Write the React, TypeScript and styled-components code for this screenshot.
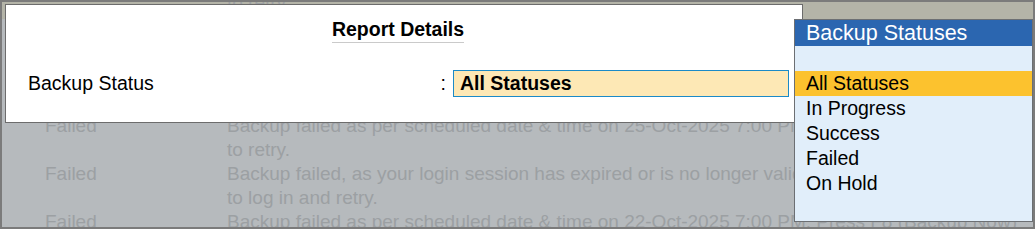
import React from 'react';
import styled, { createGlobalStyle } from 'styled-components';

const GlobalStyle = createGlobalStyle`
    * { box-sizing: border-box; }
    body {
        margin: 0;
        font-family: "Liberation Sans", Arial, sans-serif;
    }
`

const Screen = styled.div`
    position: relative;
    width: 1035px;
    height: 229px;
    border: 2px solid #7b7b7b;
    overflow: hidden;
    background: linear-gradient(#b4b4a8 0, #b4b4a8 17px, #b6babd 17px);
`

const ReportList = styled.div`
    margin-top: -35px;
    padding-left: 43px;
`

const ReportRow = styled.div<{ $first?: boolean }>`
    display: grid;
    grid-template-columns: 182px 1fr;
    font-size: 19px;
    line-height: 24px;
    color: #9ca0a3;
    white-space: nowrap;
    margin-bottom: ${(props) => (props.$first ? '3px' : '0')};
`

const Overlay = styled.div`
    position: absolute;
    left: 3px;
    top: 2px;
    width: 798px;
    height: 119px;
    background: #fff;
    border: 1px solid #6c6c6c;
    padding-top: 12px;
`

const TitleRow = styled.div`
    display: flex;
    justify-content: center;
    padding-right: 12px;
`

const Title = styled.h1`
    margin: 0;
    font-size: 19.5px;
    line-height: 24px;
    font-weight: bold;
    color: #000;
    padding-bottom: 1px;
    border-bottom: 1px solid #cacaca;
`

const FieldRow = styled.div`
    display: flex;
    align-items: center;
    margin-top: 27px;
    padding: 0 13px 0 22px;
    font-size: 19.5px;
    color: #000;
`

const Label = styled.div`
    flex: 1;
`

const Colon = styled.span`
    margin-right: 7px;
`

const Field = styled.div`
    width: 336px;
    height: 27px;
    border: 1px solid #1b8ac7;
    background: #fde8b5;
    padding-left: 6px;
    font-weight: bold;
    line-height: 25px;
`

const Popup = styled.div`
    position: absolute;
    left: 792px;
    top: 17px;
    width: 239px;
    height: 203px;
    border: 1px solid #6c6f73;
    background: #e1eefa;
`

const PopupHeader = styled.div`
    height: 26px;
    background: #2b66b0;
    color: #fff;
    font-size: 21.5px;
    line-height: 26px;
    padding-left: 11px;
`

const OptionList = styled.ul`
    list-style: none;
    margin: 25px 0 0;
    padding: 0;
`

const Option = styled.li<{ $active?: boolean }>`
    height: 25px;
    line-height: 25px;
    padding-left: 11px;
    font-size: 19.5px;
    color: #000;
    background: ${(props) => (props.$active ? '#fcc22e' : 'transparent')};
`

const rows = [
    { status: 'Failed', lines: ['Backup failed as per scheduled date & time on 28-Oct-2025 7:00 PM. Press F8 (Backup Now)', 'to retry.'] },
    { status: 'Failed', lines: ['Backup failed as per scheduled date & time on 26-Oct-2025 7:00 PM. Press F8 (Backup Now)', 'to retry.'] },
    { status: 'Success', lines: ['Backup completed successfully on 26-Oct-2025 7:00 PM.', ''] },
    { status: 'Failed', lines: ['Backup failed as per scheduled date & time on 25-Oct-2025 7:00 PM. Press F8 (Backup Now)', 'to retry.'] },
    { status: 'Failed', lines: ['Backup failed, as your login session has expired or is no longer valid. Press Ctrl+L (Login)', 'to log in and retry.'] },
    { status: 'Failed', lines: ['Backup failed as per scheduled date & time on 22-Oct-2025 7:00 PM. Press F8 (Backup Now)', 'to retry.'] },
];

const statuses = ['All Statuses', 'In Progress', 'Success', 'Failed', 'On Hold'];

function App() {
    return (
        <>
            <GlobalStyle />
            <Screen>
                <ReportList>
                    {rows.map((row, i) => (
                        <ReportRow key={i} $first={i === 0}>
                            <div>{row.status}</div>
                            <div>
                                {row.lines.map((line, j) => (
                                    <div key={j}>{line || '\u00a0'}</div>
                                ))}
                            </div>
                        </ReportRow>
                    ))}
                </ReportList>

                <Overlay>
                    <TitleRow>
                        <Title>Report Details</Title>
                    </TitleRow>
                    <FieldRow>
                        <Label>Backup Status</Label>
                        <Colon>:</Colon>
                        <Field>All Statuses</Field>
                    </FieldRow>
                </Overlay>

                <Popup>
                    <PopupHeader>Backup Statuses</PopupHeader>
                    <OptionList>
                        {statuses.map((s, i) => (
                            <Option key={s} $active={i === 0}>{s}</Option>
                        ))}
                    </OptionList>
                </Popup>
            </Screen>
        </>
    );
}

export default App;
